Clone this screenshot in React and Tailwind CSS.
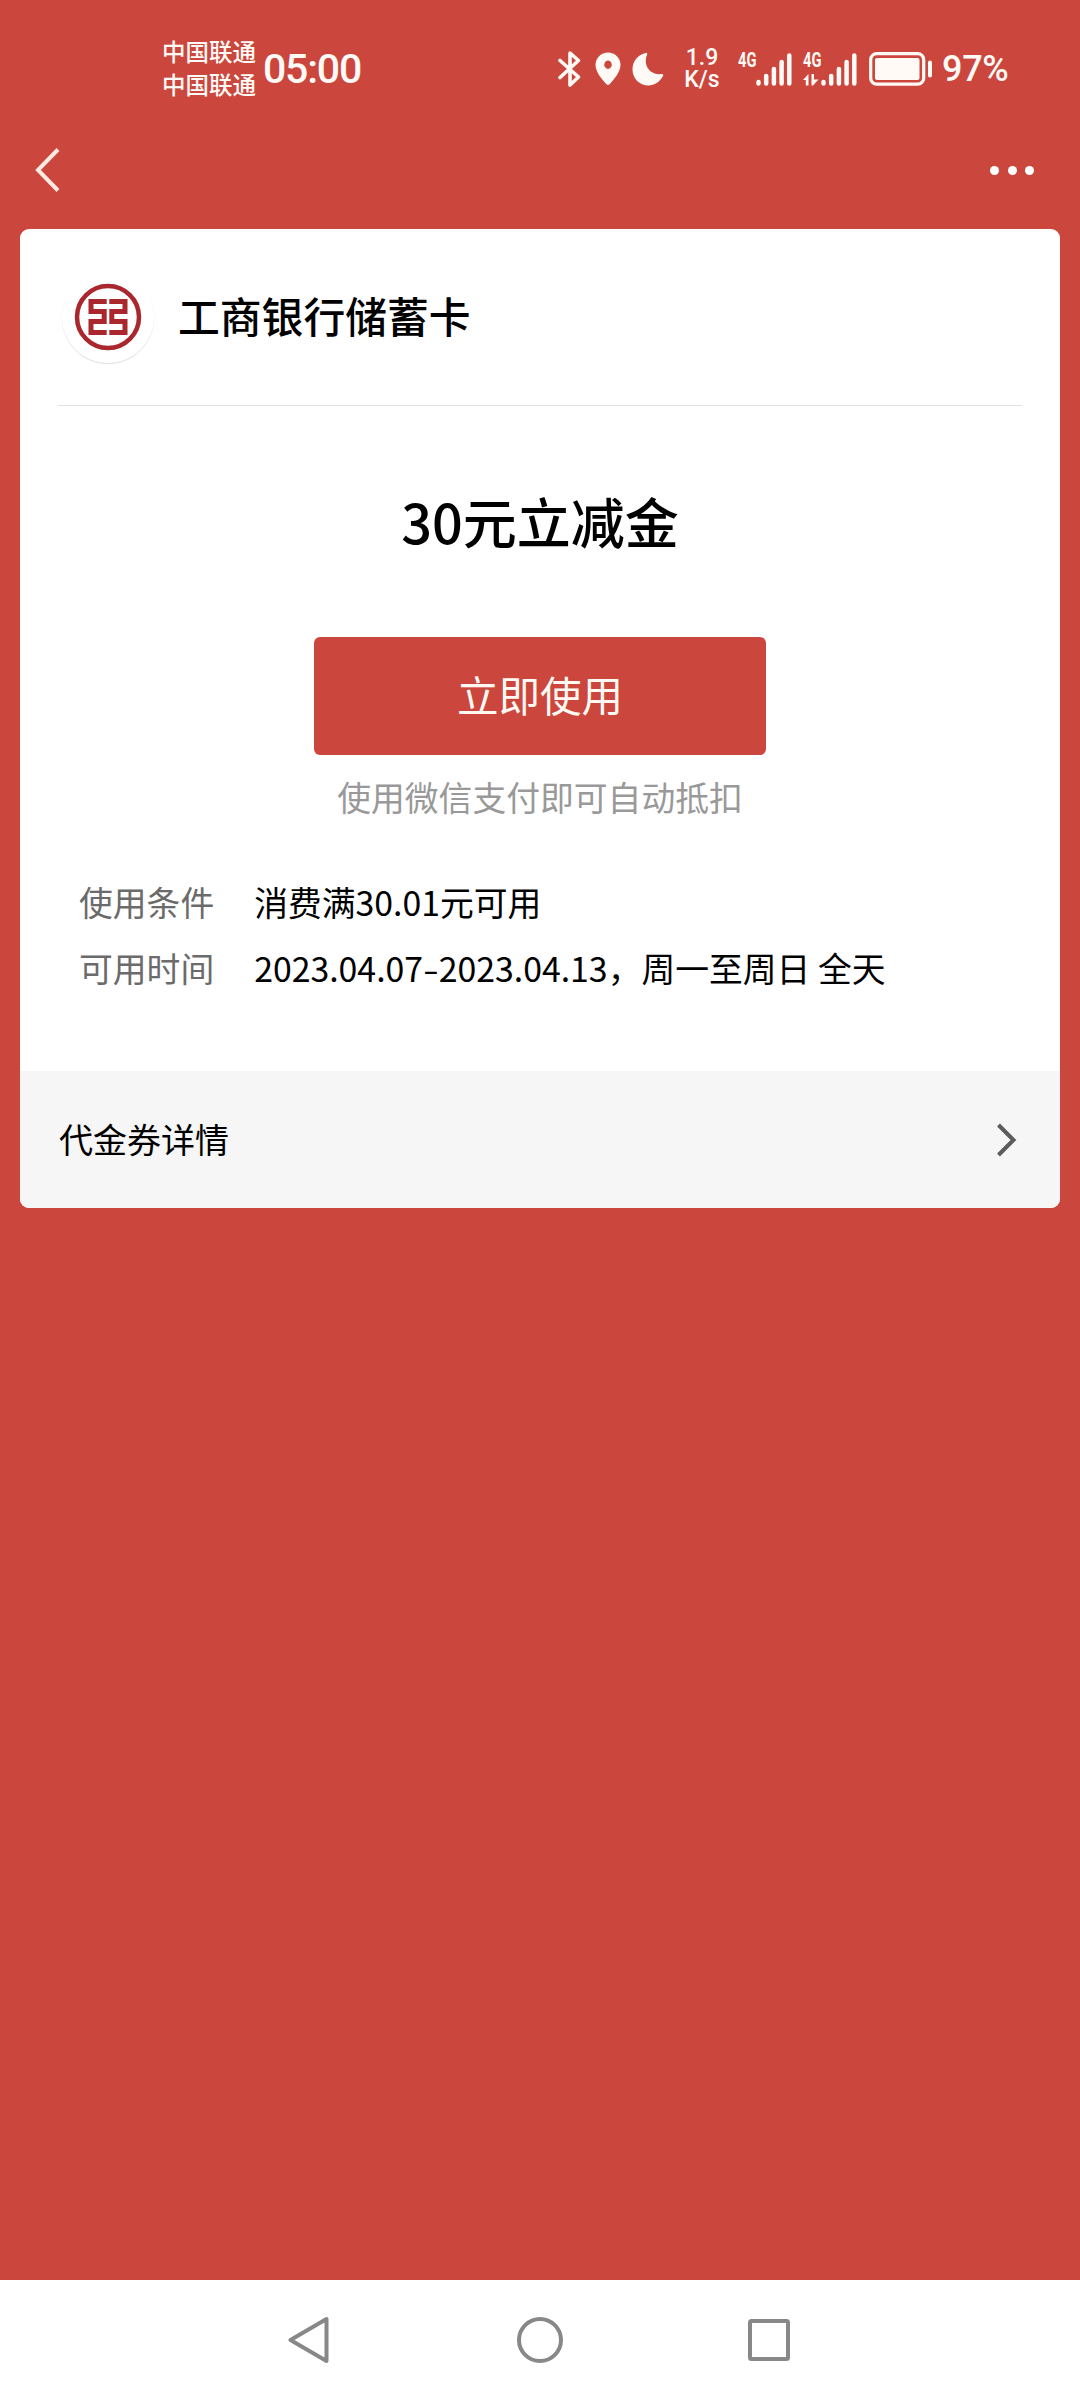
const details = [
  { label: '使用条件', value: '消费满30.01元可用' },
  { label: '可用时间', value: <>2023.04.07<span className="mx-[2px] inline-block scale-x-[1.35]">-</span>2023.04.13，周一至周日 全天</> },
];

function BluetoothIcon() {
  return (
    <svg width="24" height="38" viewBox="0 0 24 38" fill="none" stroke="currentColor" strokeWidth="3.600" strokeLinejoin="round" strokeLinecap="round">
      <path d="M2 10.500 L20.500 27 L12 35 V3 L20.500 10.500 L2 27.500" />
    </svg>
  );
}

function PinIcon() {
  return (
    <svg width="26" height="34" viewBox="0 0 26 34" fill="currentColor" fillRule="evenodd">
      <path d="M13 0.500 C20 0.500 25.500 6 25.500 13 C25.500 20 18.500 28 14.800 32 Q13 33.800 11.200 32 C7.500 28 0.500 20 0.500 13 C0.500 6 6 0.500 13 0.500 Z M13 8.500 a3.700 4.200 0 1 0 0.010 0 Z" />
    </svg>
  );
}

function MoonIcon() {
  return (
    <svg width="32" height="34" viewBox="0 0 32 34" fill="currentColor">
      <path d="M13.500 1 C14.800 0.500 15.800 1.500 15 3 C11 12 17 23.500 29.500 22 C31 21.800 31.700 22.800 31 24 C27.500 30 22.500 33.500 16.500 33.500 C7.500 33.500 0.500 26.500 0.500 17.500 C0.500 9.500 5.500 3 13.500 1 Z" />
    </svg>
  );
}

function Signal({ active }) {
  return (
    <div className="relative h-[36px] w-[54px]">
      <span className="absolute left-0 top-0 origin-left scale-x-[0.7] text-[21px] leading-[18px] font-bold">4G</span>
      <svg className="absolute left-0 top-0" width="54" height="36" viewBox="0 0 54 36" fill="none" stroke="currentColor" strokeWidth="4.500" strokeLinecap="round">
        <path d="M20.500 31 V32.500 M28.200 25 V32.500 M35.900 18 V32.500 M43.600 11 V32.500 M51.300 4.500 V32.500" />
        {active && (
          <path d="M0 29 L5.500 23 V34.500 H2.800 V29 Z M8.500 23 H11 V28.500 H15.500 L10 34.500 H8.500 Z" fill="currentColor" stroke="none" />
        )}
      </svg>
    </div>
  );
}

function BatteryIcon() {
  return (
    <svg width="64" height="34" viewBox="0 0 64 34" fill="none">
      <rect x="1.700" y="1.700" width="53" height="30.500" rx="6" stroke="currentColor" strokeWidth="3.200" />
      <rect x="6" y="6" width="44.500" height="22" rx="2" fill="currentColor" />
      <rect x="59" y="8.500" width="4" height="17" rx="2" fill="currentColor" />
    </svg>
  );
}

function StatusBar() {
  return (
    <div className="flex h-[138px] items-center pr-[69px] pl-[162px] text-[#fffaf6]">
      <div className="pb-[2px] text-[23.5px] leading-[33px] font-medium">
        <p>中国联通</p>
        <p>中国联通</p>
      </div>
      <p className="ml-[7px] font-[Roboto] text-[41px] leading-[48px] font-medium tracking-[-1.2px]">05:00</p>
      <div className="ml-auto flex items-center font-[Roboto] font-medium">
        <BluetoothIcon />
        <div className="ml-[13px]"><PinIcon /></div>
        <div className="ml-[11px]"><MoonIcon /></div>
        <div className="ml-[19px] w-[38px] text-center text-[23px] leading-[22px]">
          <p>1.9</p>
          <p>K/s</p>
        </div>
        <div className="ml-[17px]"><Signal /></div>
        <div className="ml-[11px]"><Signal active /></div>
        <div className="ml-[12px]"><BatteryIcon /></div>
        <p className="ml-[9px] w-[69px] text-[36px] leading-[44px] tracking-[-0.3px]">97%</p>
      </div>
    </div>
  );
}

function BankLogo() {
  return (
    <div className="flex size-[92px] items-center justify-center rounded-full bg-white shadow-[0_1px_1px_rgba(0,0,0,0.13)]">
      <svg width="68" height="68" viewBox="0 0 68 68" fill="none" stroke="#a9272d">
        <circle cx="34" cy="34" r="31" strokeWidth="4.500" />
        <path d="M32.700 18.500 H17 V28.500 H30.200 V38.500 H17 V49.500 H32.700 M35.300 18.500 H51 V28.500 H37.800 V38.500 H51 V49.500 H35.300" strokeWidth="5" />
      </svg>
    </div>
  );
}

function CouponCard() {
  return (
    <div className="mx-5 overflow-hidden rounded-[9px] bg-white">
      <div className="mx-[38px] flex h-[177px] items-center gap-[24px] border-b border-[#e2e2e2] pl-[4px]">
        <BankLogo />
        <h1 className="pb-[4px] text-[41.8px] leading-[60px] font-medium">工商银行储蓄卡</h1>
      </div>
      <div className="flex flex-col items-center">
        <p className="mt-[75px] text-[54px] leading-[80px] font-medium">30元立减金</p>
        <button className="mt-[76px] h-[118px] w-[452px] rounded-[6px] bg-[#cb463d] pb-[3px] text-[41.5px] text-[#fff8f3]">立即使用</button>
        <p className="mt-[18px] text-[33.8px] leading-[48px] text-[#999]">使用微信支付即可自动抵扣</p>
      </div>
      <div className="mt-[48px] ml-[59px] pb-[70px]">
        {details.map((d) => (
          <div key={d.label} className="flex h-[66px] items-center gap-[40px] text-[33.8px]">
            <span className="text-[#6b6b6b]">{d.label}</span>
            <span>{d.value}</span>
          </div>
        ))}
      </div>
      <div className="flex h-[137px] items-center justify-between bg-[#f6f6f6] pr-[43px] pl-[39px]">
        <span className="pb-[2px] text-[34px]">代金券详情</span>
        <svg width="20" height="34" viewBox="0 0 20 34" fill="none" stroke="#5c5c5c" strokeWidth="4">
          <path d="M1.500 2 L16.500 17 L1.500 32" />
        </svg>
      </div>
    </div>
  );
}

function NavBar() {
  return (
    <div className="flex h-[120px] items-center bg-white pl-[288px]">
      <svg width="504" height="48" viewBox="0 0 504 48" fill="none" stroke="#888" strokeWidth="4" strokeLinejoin="round">
        <path d="M2.500 24 L38.500 3 V45 Z" />
        <circle cx="252" cy="24" r="21" />
        <rect x="462" y="5" width="38" height="38" rx="1.500" />
      </svg>
    </div>
  );
}

export default function App() {
  return (
    <div className="flex h-[2400px] w-[1080px] flex-col bg-[#cb463d] font-['Noto_Sans_CJK_SC',sans-serif] text-black">
      <StatusBar />
      <div className="flex h-[91px] items-start justify-between pt-[10px] pr-[46px] pl-[34px]">
        <svg width="26" height="44" viewBox="0 0 26 44" fill="none" stroke="#ffe9e0" strokeWidth="4">
          <path d="M24 1.500 L4 22 L24 42.500" />
        </svg>
        <div className="flex h-[44px] items-center gap-[8.5px]">
          <span className="size-[9px] rounded-full bg-white" />
          <span className="size-[9px] rounded-full bg-white" />
          <span className="size-[9px] rounded-full bg-white" />
        </div>
      </div>
      <CouponCard />
      <div className="flex-1" />
      <NavBar />
    </div>
  );
}
